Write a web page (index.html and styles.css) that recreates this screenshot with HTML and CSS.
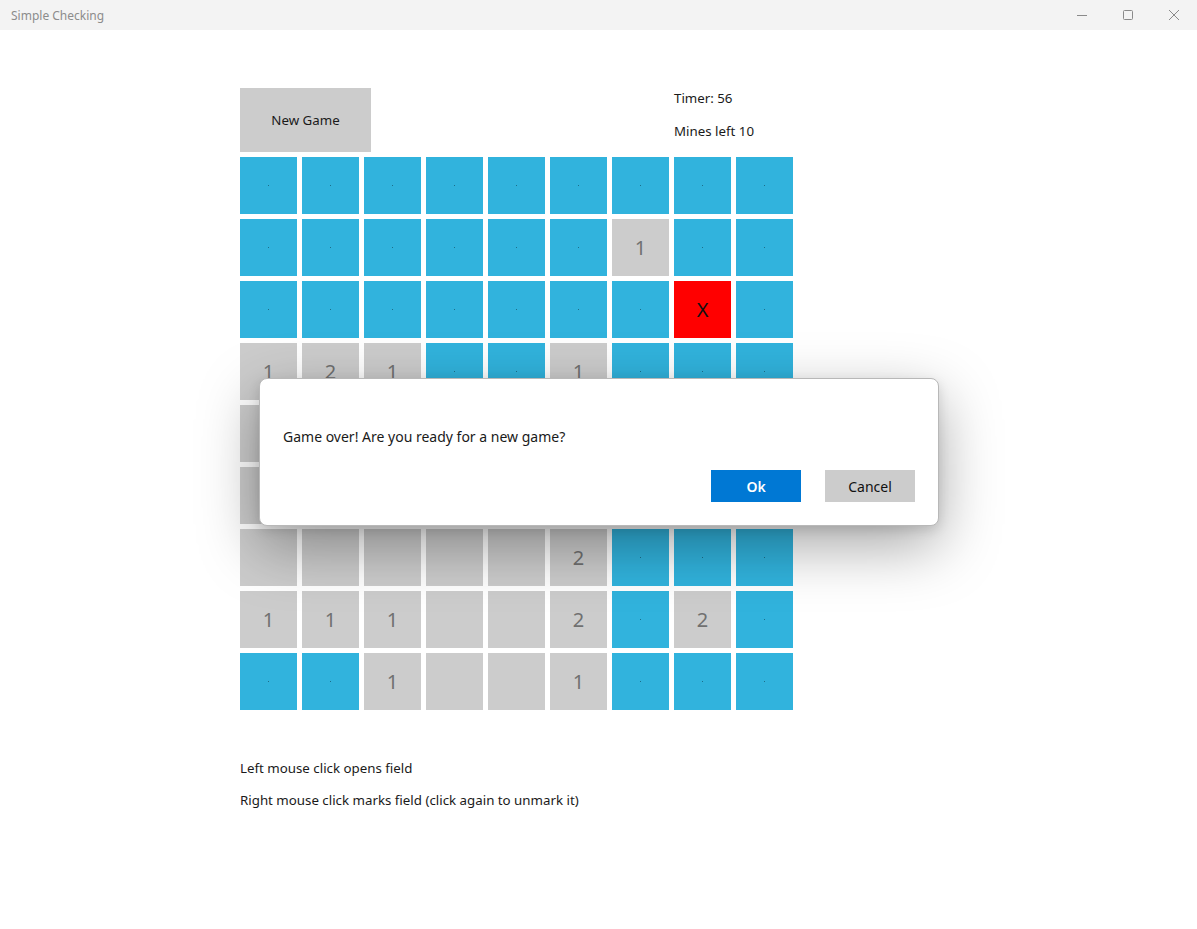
FILE: index.html
```html
<!DOCTYPE html>
<html>
<head>
<meta charset="utf-8">
<link rel="stylesheet" href="styles.css">
</head>
<body>
<div class="window">
  <div class="titlebar">
    <span class="title">Simple Checking</span>
    <div class="controls">
      <span class="ctl"><svg width="12" height="12" viewBox="0 0 12 12"><path d="M1 6.5h10" stroke="#8a8a8a" stroke-width="1"/></svg></span>
      <span class="ctl"><svg width="12" height="12" viewBox="0 0 12 12"><rect x="1.5" y="1.5" width="9" height="9" rx="1" fill="none" stroke="#8a8a8a" stroke-width="1"/></svg></span>
      <span class="ctl"><svg width="12" height="12" viewBox="0 0 12 12"><path d="M1 1L11 11M11 1L1 11" stroke="#8a8a8a" stroke-width="1"/></svg></span>
    </div>
  </div>
  <div class="content">
    <div class="header">
      <button class="newgame">New Game</button>
      <div class="stats">
        <div class="stat">Timer: 56</div>
        <div class="stat">Mines left 10</div>
      </div>
    </div>
    <div class="grid">
      <!-- row 0 -->
      <div class="cell b"><i></i></div><div class="cell b"><i></i></div><div class="cell b"><i></i></div><div class="cell b"><i></i></div><div class="cell b"><i></i></div><div class="cell b"><i></i></div><div class="cell b"><i></i></div><div class="cell b"><i></i></div><div class="cell b"><i></i></div>
      <!-- row 1 -->
      <div class="cell b"><i></i></div><div class="cell b"><i></i></div><div class="cell b"><i></i></div><div class="cell b"><i></i></div><div class="cell b"><i></i></div><div class="cell b"><i></i></div><div class="cell g">1</div><div class="cell b"><i></i></div><div class="cell b"><i></i></div>
      <!-- row 2 -->
      <div class="cell b"><i></i></div><div class="cell b"><i></i></div><div class="cell b"><i></i></div><div class="cell b"><i></i></div><div class="cell b"><i></i></div><div class="cell b"><i></i></div><div class="cell b"><i></i></div><div class="cell r">X</div><div class="cell b"><i></i></div>
      <!-- row 3 -->
      <div class="cell g">1</div><div class="cell g">2</div><div class="cell g">1</div><div class="cell b"><i></i></div><div class="cell b"><i></i></div><div class="cell g">1</div><div class="cell b"><i></i></div><div class="cell b"><i></i></div><div class="cell b"><i></i></div>
      <!-- row 4 (under dialog) -->
      <div class="cell g"></div><div class="cell g"></div><div class="cell g"></div><div class="cell g"></div><div class="cell g"></div><div class="cell g"></div><div class="cell b"></div><div class="cell b"></div><div class="cell b"></div>
      <!-- row 5 (under dialog) -->
      <div class="cell g"></div><div class="cell g"></div><div class="cell g"></div><div class="cell g"></div><div class="cell g"></div><div class="cell g"></div><div class="cell b"></div><div class="cell b"></div><div class="cell b"></div>
      <!-- row 6 -->
      <div class="cell g"></div><div class="cell g"></div><div class="cell g"></div><div class="cell g"></div><div class="cell g"></div><div class="cell g">2</div><div class="cell b"><i></i></div><div class="cell b"><i></i></div><div class="cell b"><i></i></div>
      <!-- row 7 -->
      <div class="cell g">1</div><div class="cell g">1</div><div class="cell g">1</div><div class="cell g"></div><div class="cell g"></div><div class="cell g">2</div><div class="cell b"><i></i></div><div class="cell g">2</div><div class="cell b"><i></i></div>
      <!-- row 8 -->
      <div class="cell b"><i></i></div><div class="cell b"><i></i></div><div class="cell g">1</div><div class="cell g"></div><div class="cell g"></div><div class="cell g">1</div><div class="cell b"><i></i></div><div class="cell b"><i></i></div><div class="cell b"><i></i></div>
    </div>
    <div class="help">
      <p>Left mouse click opens field</p>
      <p>Right mouse click marks field (click again to unmark it)</p>
    </div>
  </div>
  <div class="dialog">
    <p class="msg">Game over! Are you ready for a new game?</p>
    <div class="actions">
      <button class="btn primary">Ok</button>
      <button class="btn secondary">Cancel</button>
    </div>
  </div>
</div>
</body>
</html>
```
FILE: styles.css
```css
html, body {
  margin: 0;
  padding: 0;
  background: #ffffff;
}
body {
  font-family: "Noto Sans", "Open Sans", sans-serif;
  color: #1a1a1a;
}
.window {
  position: relative;
  width: 1197px;
  height: 929px;
  overflow: hidden;
}
.titlebar {
  height: 30px;
  background: #f3f3f3;
  display: flex;
  align-items: center;
  justify-content: space-between;
}
.title {
  font-size: 12px;
  color: #8c8c8c;
  padding-left: 11px;
}
.controls {
  display: flex;
  height: 30px;
}
.ctl {
  width: 46px;
  height: 30px;
  display: flex;
  align-items: center;
  justify-content: center;
}
.content {
  padding-left: 240px;
  padding-top: 58px;
  display: flex;
  flex-direction: column;
}
.header {
  display: flex;
  height: 64px;
  margin-bottom: 5px;
}
.newgame {
  width: 131px;
  height: 64px;
  border: none;
  background: #cccccc;
  font-family: inherit;
  font-size: 13.3px;
  color: #1a1a1a;
  padding: 0;
}
.stats {
  margin-left: 303px;
  display: flex;
  flex-direction: column;
  gap: 13px;
}
.stat {
  font-size: 13.3px;
  line-height: 20px;
}
.grid {
  display: grid;
  grid-template-columns: repeat(9, 57px);
  grid-auto-rows: 57px;
  gap: 5px;
}
.cell {
  display: flex;
  align-items: center;
  justify-content: center;
  font-size: 20px;
  color: #707070;
}
.cell.b { background: #31b3dd; }
.cell.g { background: #cccccc; }
.cell.r { background: #ff0000; color: #111111; }
.cell i {
  display: block;
  width: 1px;
  height: 1px;
  background: #1c6e8a;
}
.help {
  margin-top: 48px;
  font-size: 13.3px;
}
.help p {
  margin: 0 0 12px 0;
  line-height: 20px;
}
.dialog {
  position: absolute;
  left: 259px;
  top: 378px;
  width: 678px;
  height: 146px;
  background: #ffffff;
  border: 1px solid #b8b8b8;
  border-radius: 8px;
  box-shadow: 0 20px 60px rgba(0, 0, 0, 0.35), 0 4px 12px rgba(0,0,0,0.12);
  display: flex;
  flex-direction: column;
}
.msg {
  margin: 48px 0 0 23px;
  font-size: 14px;
  line-height: 20px;
}
.actions {
  display: flex;
  justify-content: flex-end;
  gap: 24px;
  margin: 23px 23px 0 0;
}
.btn {
  width: 90px;
  height: 32px;
  border: none;
  font-family: inherit;
  font-size: 14px;
  padding: 0;
}
.btn.primary {
  background: #0078d4;
  color: #ffffff;
  font-weight: 600;
}
.btn.secondary {
  background: #cccccc;
  color: #111111;
}
```
